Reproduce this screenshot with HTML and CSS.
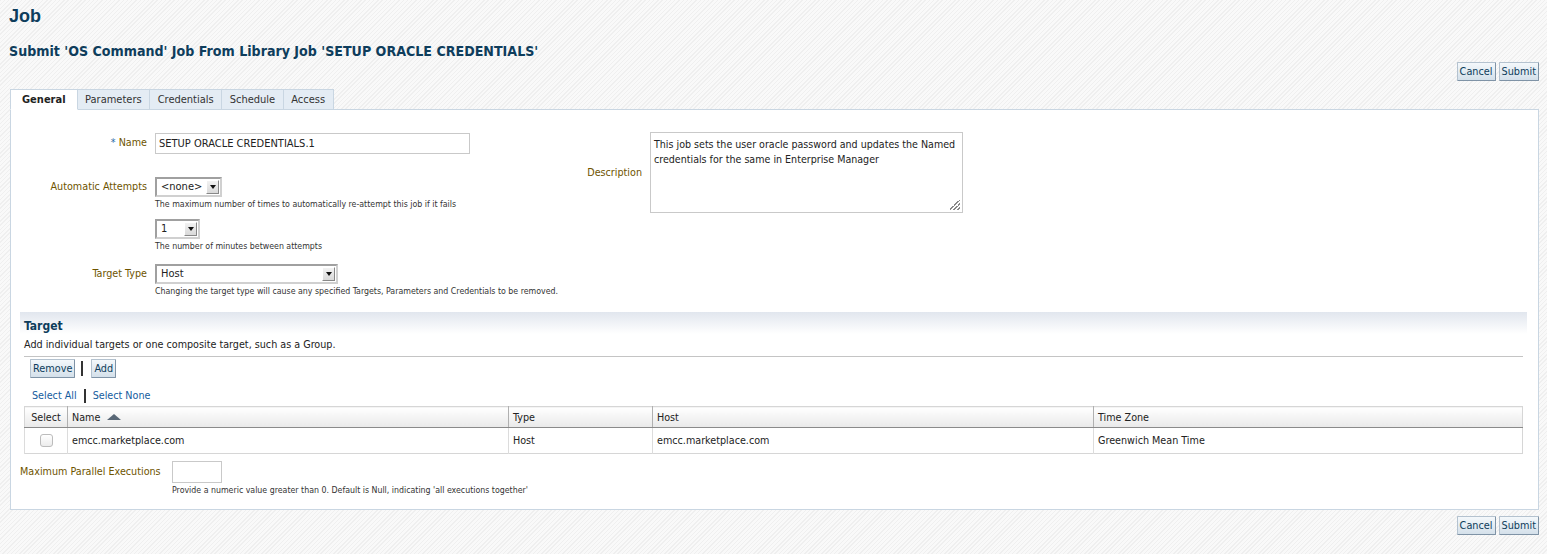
FILE: index.html
```html
<!DOCTYPE html>
<html>
<head>
<meta charset="utf-8">
<title>Job</title>
<link rel="stylesheet" href="styles.css">
</head>
<body>
<h1 class="page-title">Job</h1>
<h2 class="sub-title">Submit 'OS Command' Job From Library Job 'SETUP ORACLE CREDENTIALS'</h2>
<div class="actions actions-top">
  <button class="btn">Cancel</button>
  <button class="btn">Submit</button>
</div>
<div class="tabs">
  <div class="tab tab-active">General</div>
  <div class="tab">Parameters</div>
  <div class="tab">Credentials</div>
  <div class="tab">Schedule</div>
  <div class="tab">Access</div>
  <div class="tab-fill"></div>
</div>
<div class="panel">
  <div class="form-top">
    <div class="form-left">
      <div class="row row-name">
        <label class="lbl"><span class="req">*</span> Name</label>
        <div class="field"><div class="textbox textbox-name">SETUP ORACLE CREDENTIALS.1</div></div>
      </div>
      <div class="row row-attempts">
        <label class="lbl">Automatic Attempts</label>
        <div class="field">
          <div class="select select-none"><span class="select-val">&lt;none&gt;</span><span class="select-btn"><span class="tri"></span></span></div>
          <div class="help">The maximum number of times to automatically re-attempt this job if it fails</div>
        </div>
      </div>
      <div class="row row-minutes">
        <span class="lbl"></span>
        <div class="field">
          <div class="select select-one"><span class="select-val">1</span><span class="select-btn"><span class="tri"></span></span></div>
          <div class="help">The number of minutes between attempts</div>
        </div>
      </div>
      <div class="row row-type">
        <label class="lbl">Target Type</label>
        <div class="field">
          <div class="select select-host"><span class="select-val">Host</span><span class="select-btn"><span class="tri"></span></span></div>
          <div class="help">Changing the target type will cause any specified Targets, Parameters and Credentials to be removed.</div>
        </div>
      </div>
    </div>
    <div class="form-right">
      <label class="lbl lbl-desc">Description</label>
      <div class="textarea">This job sets the user oracle password and updates the Named credentials for the same in Enterprise Manager<span class="grip"></span></div>
    </div>
  </div>

  <div class="section">
    <div class="section-head">Target</div>
    <div class="section-desc">Add individual targets or one composite target, such as a Group.</div>
    <div class="toolbar">
      <button class="btn">Remove</button>
      <span class="sep"></span>
      <button class="btn">Add</button>
    </div>
    <div class="links">
      <a class="link">Select All</a>
      <span class="sep sep-link"></span>
      <a class="link">Select None</a>
    </div>
    <table class="grid">
      <thead>
        <tr>
          <th class="c-sel">Select</th>
          <th class="c-name">Name <span class="sort"></span></th>
          <th class="c-type">Type</th>
          <th class="c-host">Host</th>
          <th class="c-tz">Time Zone</th>
        </tr>
      </thead>
      <tbody>
        <tr>
          <td class="c-sel"><span class="check"></span></td>
          <td>emcc.marketplace.com</td>
          <td>Host</td>
          <td>emcc.marketplace.com</td>
          <td>Greenwich Mean Time</td>
        </tr>
      </tbody>
    </table>
  </div>

  <div class="row-parallel">
    <label class="lbl lbl-parallel">Maximum Parallel Executions</label>
    <div class="field">
      <div class="textbox textbox-small"></div>
      <div class="help help-parallel">Provide a numeric value greater than 0. Default is Null, indicating 'all executions together'</div>
    </div>
  </div>
</div>
<div class="actions actions-bottom">
  <button class="btn">Cancel</button>
  <button class="btn">Submit</button>
</div>
</body>
</html>
```
FILE: styles.css
```css
html, body {
  margin: 0;
  padding: 0;
}
body {
  padding: 0 8px 0 10px;
  font-family: "DejaVu Sans Condensed", "DejaVu Sans", sans-serif;
  font-size: 10.7px;
  color: #222;
  background-color: #f4f4f4;
  background-image: repeating-linear-gradient(135deg, #efefef 0 1px, #f9f9f9 1px 3px);
  min-height: 554px;
  box-sizing: border-box;
}
.page-title {
  margin: 0;
  padding-top: 6px;
  margin-left: -1px;
  font-family: "Liberation Sans", Arial, sans-serif;
  font-size: 18px;
  font-weight: bold;
  color: #0e3d5c;
  line-height: 20px;
}
.sub-title {
  margin: 17px 0 0 -1px;
  font-family: "DejaVu Sans Condensed", sans-serif;
  font-size: 14.1px;
  font-weight: bold;
  color: #0e3d5c;
  line-height: 16px;
}
.actions {
  display: flex;
  justify-content: flex-end;
  gap: 3px;
}
.actions-top {
  margin-top: 3px;
}
.actions-bottom {
  margin-top: 6px;
}
.btn {
  font-family: "DejaVu Sans Condensed", sans-serif;
  font-size: 10.8px;
  color: #0e3d5c;
  height: 19px;
  padding: 0 2px;
  margin: 0;
  border: 1px solid #b4c2cf;
  border-right-color: #7f93a6;
  border-bottom-color: #7f93a6;
  background: linear-gradient(#f4f8fb, #d4e0ea);
  border-radius: 1px;
  line-height: 16px;
}
.tabs {
  display: flex;
  margin-top: 8px;
  height: 21px;
}
.tab {
  box-sizing: border-box;
  height: 21px;
  padding: 0 7.5px;
  line-height: 20px;
  background: #e4ecf4;
  border: 1px solid #c9d6e2;
  border-left: none;
  color: #333;
  font-size: 11px;
}
.tab:first-child {
  border-left: 1px solid #c9d6e2;
}
.tab-active {
  background: #fff;
  font-weight: bold;
  border-bottom-color: #fff;
  padding: 0 11px;
  color: #222;
}
.tab-fill {
  flex: 1;
  border-bottom: 1px solid #c9d6e2;
}
.panel {
  background: #fff;
  border: 1px solid #c9d6e2;
  border-top: none;
  padding: 0 11px 13px 9px;
}
.form-top {
  display: flex;
  padding-top: 22px;
}
.form-left {
  width: 567px;
}
.row {
  display: grid;
  grid-template-columns: 127px auto;
  column-gap: 8px;
  align-items: start;
}
.lbl {
  color: #6e5400;
  text-align: right;
  line-height: 20px;
  white-space: nowrap;
}
.req {
  color: #2a6aa6;
}
.row-name {
  margin-top: 1px;
}
.row-attempts {
  margin-top: 23px;
}
.row-minutes {
  margin-top: 9px;
}
.row-type {
  margin-top: 12px;
}
.field {
  display: flex;
  flex-direction: column;
  align-items: flex-start;
}
.textbox {
  box-sizing: border-box;
  height: 21px;
  border: 1px solid #c9c9c9;
  padding: 0 3px;
  line-height: 19px;
  background: #fff;
  color: #222;
}
.textbox-name {
  width: 315px;
  font-size: 11px;
}
.textbox-small {
  width: 50px;
  height: 22px;
}
.select {
  box-sizing: border-box;
  display: flex;
  height: 20px;
  border: 2px solid #a0a0a0;
  border-bottom-color: #d0d0d0;
  border-right-color: #d0d0d0;
  background: #fff;
}
.select-val {
  flex: 1;
  padding-left: 4px;
  line-height: 16px;
  font-size: 11px;
}
.select-btn {
  width: 13px;
  margin: 1px;
  box-sizing: border-box;
  border: 1px solid #fff;
  border-right-color: #888;
  border-bottom-color: #888;
  background: linear-gradient(#f2f2f2, #d9d9d9);
  display: flex;
  align-items: center;
  justify-content: center;
}
.tri {
  width: 0;
  height: 0;
  border-left: 3px solid transparent;
  border-right: 3px solid transparent;
  border-top: 4px solid #111;
}
.select-none { width: 67px; }
.select-one { width: 45px; }
.select-host { width: 183px; }
.help {
  font-size: 8.75px;
  color: #333;
  margin-top: 2px;
  line-height: 11px;
  white-space: nowrap;
}
.form-right {
  display: flex;
  align-items: center;
  gap: 8px;
  height: 81px;
}
.lbl-desc {
  width: 55px;
}
.textarea {
  position: relative;
  box-sizing: border-box;
  width: 313px;
  height: 81px;
  border: 1px solid #c9c9c9;
  padding: 4px 1px 4px 3px;
  line-height: 15px;
  font-size: 10.6px;
  color: #222;
}
.grip {
  position: absolute;
  right: 2px;
  bottom: 2px;
  width: 10px;
  height: 10px;
  background: linear-gradient(135deg, transparent 0 45%, #888 45% 52%, transparent 52% 65%, #888 65% 72%, transparent 72% 85%, #888 85% 92%, transparent 92%);
}
.section {
  margin-top: 15px;
}
.section-head {
  height: 22px;
  line-height: 28px;
  padding-left: 4px;
  font-weight: bold;
  font-size: 12px;
  color: #0e3d5c;
  background: linear-gradient(#e1e6ee, #ffffff);
}
.section-desc {
  margin-left: 4px;
  margin-right: 4px;
  padding: 3px 0 4px;
  border-bottom: 1px solid #c4c4c4;
  line-height: 15px;
  color: #222;
}
.toolbar {
  display: flex;
  align-items: center;
  padding: 2px 0 0 10px;
}
.toolbar .sep {
  margin: 0 8px 0 6px;
}
.sep {
  display: inline-block;
  width: 2px;
  height: 15px;
  background: #333;
}
.links {
  display: flex;
  align-items: center;
  gap: 7px;
  padding: 11px 0 0 12px;
  line-height: 14px;
}
.link {
  color: #145c9e;
}
.sep-link {
  height: 14px;
}
.grid {
  margin: 3px 4px 0 4px;
  width: calc(100% - 8px);
  border-collapse: collapse;
  border: 1px solid #d6d6d6;
}
.grid th {
  text-align: left;
  font-weight: normal;
  height: 20px;
  padding: 0 4px;
  background: linear-gradient(#ffffff, #e9e9e9);
  border-left: 1px solid #b0b0b0;
  border-bottom: 1px solid #8a8a8a;
  color: #222;
}
.grid th:first-child {
  border-left: none;
  text-align: center;
}
.grid td {
  height: 25px;
  padding: 0 4px;
  border-left: 1px solid #dcdcdc;
  color: #222;
}
.grid .c-sel { width: 34px; text-align: center; }
.grid .c-name { width: 432px; }
.grid .c-type { width: 135px; }
.grid .c-host { width: 432px; }
.sort {
  display: inline-block;
  width: 0;
  height: 0;
  margin-left: 4px;
  border-left: 7px solid transparent;
  border-right: 7px solid transparent;
  border-bottom: 6px solid #5a6877;
  vertical-align: 1px;
}
.check {
  display: inline-block;
  width: 11px;
  height: 11px;
  border: 1px solid #bcbcbc;
  border-radius: 3px;
  background: linear-gradient(#ffffff, #ececec);
  vertical-align: middle;
}
.row-parallel {
  display: flex;
  align-items: flex-start;
  gap: 12px;
  margin-top: 7px;
}
.lbl-parallel {
  width: 140px;
  line-height: 22px;
  text-align: left;
}
```
